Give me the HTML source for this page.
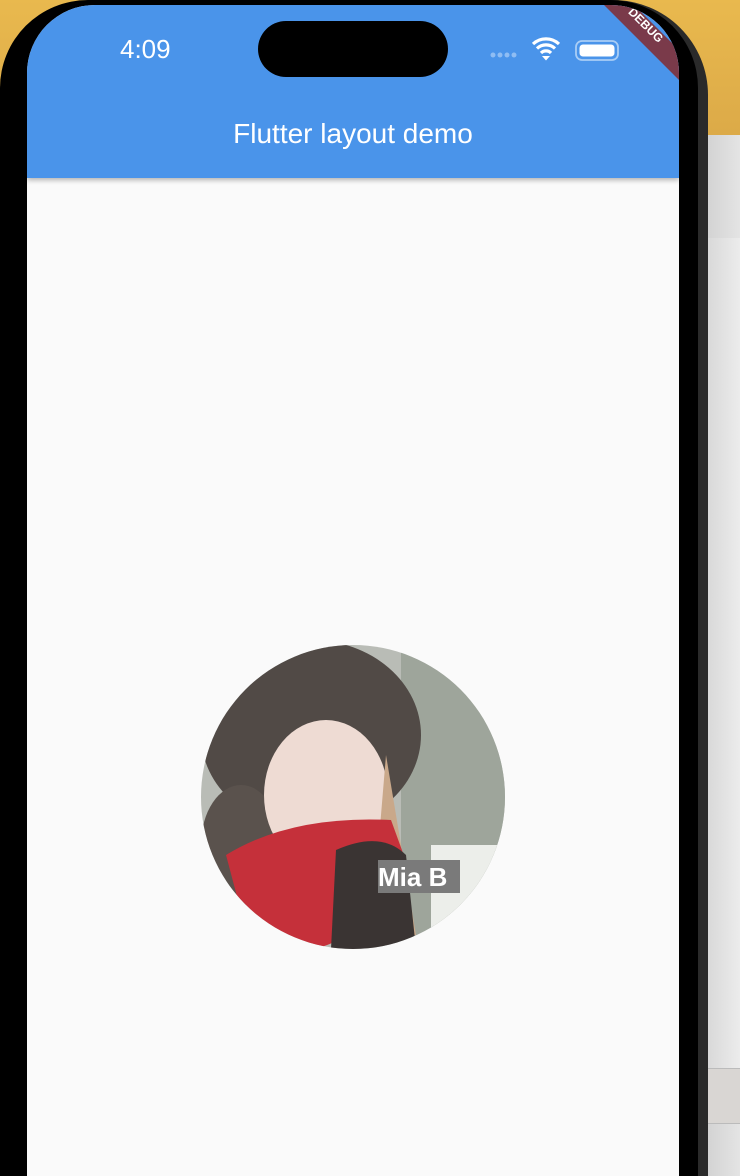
<!DOCTYPE html>
<html><head><meta charset="utf-8"><style>
html,body{margin:0;padding:0;width:740px;height:1176px;overflow:hidden}
body{position:relative;background:linear-gradient(90deg,#d8d8d8,#e6e6e6);font-family:"Liberation Sans",sans-serif}
.top{position:absolute;left:0;top:0;width:740px;height:135px;background:linear-gradient(180deg,#e9b94e,#dcaa48)}
.rbg{position:absolute;left:700px;top:135px;width:40px;height:1041px;background:linear-gradient(90deg,#cfcfcf,#e4e4e4)}
.rbg2{position:absolute;left:700px;top:238px;width:40px;height:830px;background:linear-gradient(90deg,#d4d4d4,#ececec)}
.rbg3{position:absolute;left:700px;top:1068px;width:40px;height:54px;background:#d9d6d3;border-top:1px solid #bbb;border-bottom:1px solid #bbb}
.frame{position:absolute;left:0;top:0;width:708px;height:1176px;border-radius:95px 95px 0 0;background:#2a2a2a}
.frame2{position:absolute;left:0;top:0;width:698px;height:1176px;border-radius:88px 88px 0 0;background:#000}
.screen{position:absolute;left:27px;top:5px;width:652px;height:1171px;border-radius:68px 68px 0 0;overflow:hidden;background:#fafafa}
.bar{position:absolute;left:0;top:0;width:652px;height:173px;background:#4a94ea;box-shadow:0 2px 5px rgba(0,0,0,.3)}
.title{position:absolute;left:0;width:652px;top:113px;text-align:center;color:#fff;font-size:28px}
.time{position:absolute;left:93px;top:29px;color:#fff;font-size:26px}
.island{position:absolute;left:231px;top:16px;width:190px;height:56px;border-radius:28px;background:#000}
</style></head><body>
<div class="top"></div><div class="rbg"></div><div class="rbg2"></div><div class="rbg3"></div>
<div class="frame"></div><div class="frame2"></div>
<div class="screen">
<div class="bar"></div>
<div class="time">4:09</div>
<div class="island"></div>
<svg style="position:absolute;left:460px;top:28px" width="170" height="34">
<g fill="#8fbdf3"><circle cx="6" cy="22" r="2.5"/><circle cx="13" cy="22" r="2.5"/><circle cx="20" cy="22" r="2.5"/><circle cx="27" cy="22" r="2.5"/></g>
<path d="M46 11a19 19 0 0 1 26 0M50 15.5a13 13 0 0 1 18 0M54 20a7 7 0 0 1 10 0" stroke="#fff" stroke-width="3.2" fill="none"/><path d="M55 23l4 4.5 4-4.5z" fill="#fff"/>
<rect x="89" y="8" width="42" height="19" rx="6" fill="none" stroke="#a9cdf5" stroke-width="1.8"/><rect x="92.5" y="11.5" width="35" height="12" rx="3.5" fill="#fff"/>
</svg>
<svg style="position:absolute;left:552px;top:-5px" width="100" height="100"><polygon points="20,0 50,0 100,50 100,80" fill="#7a3a4a"/><text x="0" y="0" transform="translate(64,28) rotate(45)" fill="#fff" font-size="12" font-weight="bold" text-anchor="middle" font-family="Liberation Sans">DEBUG</text></svg>
<div class="title">Flutter layout demo</div>
</div>
<svg style="position:absolute;left:201px;top:645px" width="304" height="304">
<defs><clipPath id="c"><circle cx="152" cy="152" r="152"/></clipPath></defs>
<g clip-path="url(#c)">
<rect width="304" height="304" fill="#b9bcb6"/>
<rect x="200" y="0" width="104" height="304" fill="#9ea59b"/>
<rect x="230" y="200" width="74" height="104" fill="#eceeea"/>
<ellipse cx="110" cy="90" rx="110" ry="95" fill="#514a46"/>
<ellipse cx="40" cy="200" rx="40" ry="60" fill="#5a524d"/>
<ellipse cx="125" cy="150" rx="62" ry="75" fill="#eedbd3"/>
<path d="M185 110 L215 290 L170 290 Z" fill="#c9a88a"/>
<path d="M25 210 Q90 170 190 175 L210 230 Q150 300 110 304 L50 304 Z" fill="#c5303a"/>
<path d="M135 205 Q180 185 205 210 L215 304 L130 304 Z" fill="#3a3433"/>
</g>
</svg>
<div style="position:absolute;left:378px;top:860px;width:82px;height:33px;background:#7a7a7a"></div>
<div style="position:absolute;left:378px;top:861px;color:#fff;font-size:26px;font-weight:bold;line-height:33px">Mia B</div>
</body></html>
